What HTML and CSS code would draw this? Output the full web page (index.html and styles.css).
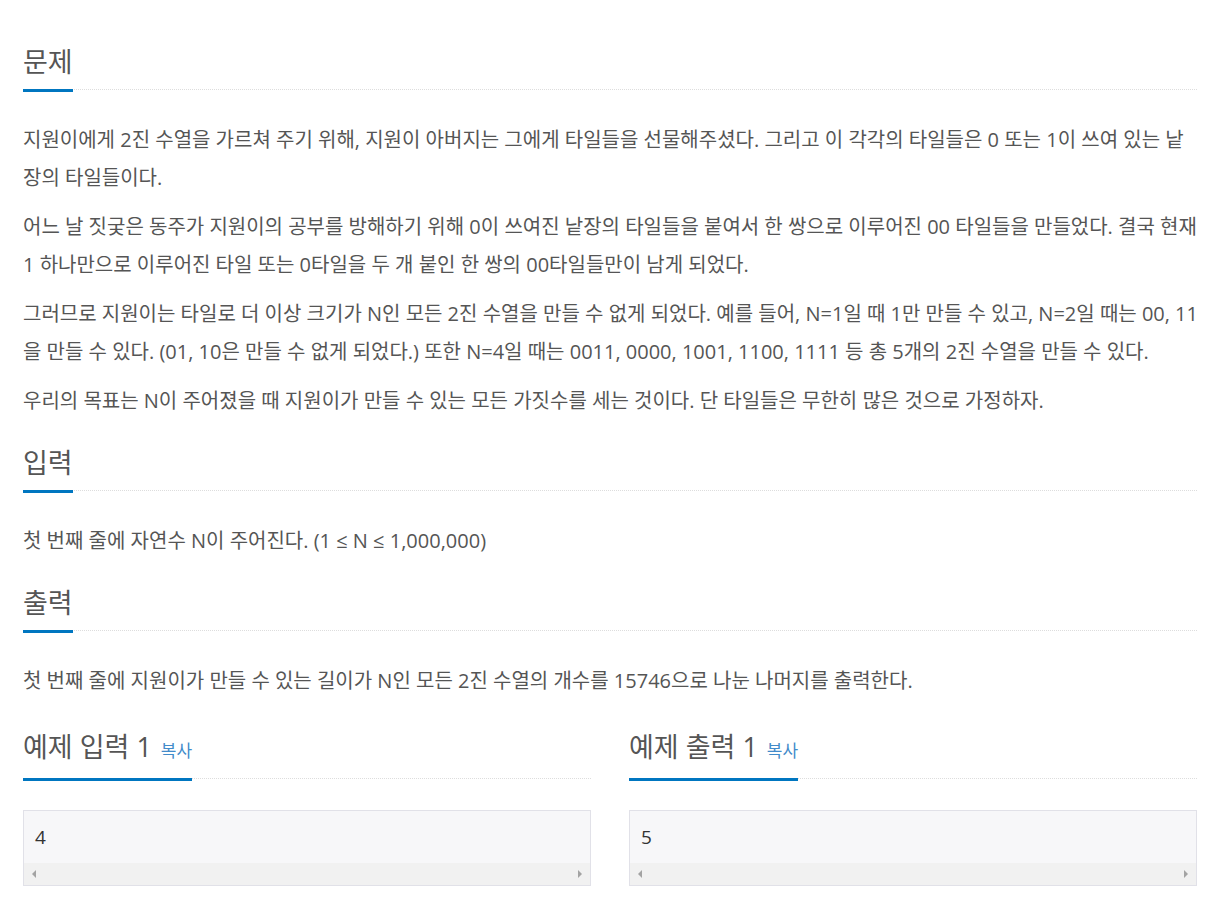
FILE: index.html
```html
<!DOCTYPE html>
<html lang="ko">
<head>
  <meta charset="UTF-8" />
  <meta name="viewport" content="width=device-width, initial-scale=1.0"/>
  <title>문제</title>
  <link rel="stylesheet" href="styles.css">
</head>
<body>
  <div class="problem">

    <!-- 문제 -->
    <section class="section">
      <div class="headline">
        <h2>문제</h2>
      </div>
      <p>지원이에게 2진 수열을 가르쳐 주기 위해, 지원이 아버지는 그에게 타일들을 선물해주셨다. 그리고 이 각각의 타일들은 0 또는 1이 쓰여 있는 낱장의 타일들이다.</p>
      <p>어느 날 짓궂은 동주가 지원이의 공부를 방해하기 위해 0이 쓰여진 낱장의 타일들을 붙여서 한 쌍으로 이루어진 00 타일들을 만들었다. 결국 현재 1 하나만으로 이루어진 타일 또는 0타일을 두 개 붙인 한 쌍의 00타일들만이 남게 되었다.</p>
      <p>그러므로 지원이는 타일로 더 이상 크기가 N인 모든 2진 수열을 만들 수 없게 되었다. 예를 들어, N=1일 때 1만 만들 수 있고, N=2일 때는 00, 11을 만들 수 있다. (01, 10은 만들 수 없게 되었다.) 또한 N=4일 때는 0011, 0000, 1001, 1100, 1111 등 총 5개의 2진 수열을 만들 수 있다.</p>
      <p>우리의 목표는 N이 주어졌을 때 지원이가 만들 수 있는 모든 가짓수를 세는 것이다. 단 타일들은 무한히 많은 것으로 가정하자.</p>
    </section>

    <!-- 입력 -->
    <section class="section">
      <div class="headline">
        <h2>입력</h2>
      </div>
      <p>첫 번째 줄에 자연수 N이 주어진다. (1 ≤ N ≤ 1,000,000)</p>
    </section>

    <!-- 출력 -->
    <section class="section">
      <div class="headline">
        <h2>출력</h2>
      </div>
      <p>첫 번째 줄에 지원이가 만들 수 있는 길이가 N인 모든 2진 수열의 개수를 15746으로 나눈 나머지를 출력한다.</p>
    </section>

    <!-- 예제 -->
    <div class="samples">
      <section class="sample">
        <div class="headline">
          <h2>예제 입력 1 <a class="copy" href="#">복사</a></h2>
        </div>
        <div class="sample-box">
          <pre class="sample-data">4</pre>
          <div class="scrollbar"><span class="arrow-left"></span><span class="arrow-right"></span></div>
        </div>
      </section>
      <section class="sample">
        <div class="headline">
          <h2>예제 출력 1 <a class="copy" href="#">복사</a></h2>
        </div>
        <div class="sample-box">
          <pre class="sample-data">5</pre>
          <div class="scrollbar"><span class="arrow-left"></span><span class="arrow-right"></span></div>
        </div>
      </section>
    </div>

  </div>
</body>
</html>
```

FILE: styles.css
```css
* {
  box-sizing: border-box;
}

body {
  margin: 0;
  font-family: "Open Sans", "Noto Sans CJK KR", sans-serif;
  color: #555;
  background-color: #fff;
}

.problem {
  padding: 45px 15px 0 23px;
}

.section {
  margin-bottom: 26px;
}

.headline {
  border-bottom: 1px dotted #ddd;
  margin-bottom: 31px;
}

.headline h2 {
  display: inline-block;
  margin: 0 0 -3px 0;
  padding-bottom: 10px;
  font-size: 27px;
  line-height: 34px;
  font-weight: normal;
  color: #555;
  border-bottom: 3px solid #0076c0;
}

.section p {
  margin: 0 -4px 11px 0;
  font-size: 20px;
  line-height: 38px;
  word-break: break-all;
}

.section p:last-child {
  margin-bottom: 0;
}

.samples {
  display: grid;
  grid-template-columns: 1fr 1fr;
  gap: 38px;
  padding-top: 4px;
}

.copy {
  font-size: 17px;
  color: #428bca;
  text-decoration: none;
  margin-left: 2px;
}

.sample-box {
  border: 1px solid #e1e1e8;
  background-color: #f7f7f9;
}

.sample-data {
  margin: 0;
  padding: 14px 11px;
  font-family: "Open Sans", sans-serif;
  font-size: 19px;
  line-height: 24px;
  color: #333;
}

.scrollbar {
  height: 22px;
  background-color: #f1f1f1;
  display: flex;
  align-items: center;
  justify-content: space-between;
  padding: 0 8px;
}

.arrow-left {
  width: 0;
  height: 0;
  border-top: 4px solid transparent;
  border-bottom: 4px solid transparent;
  border-right: 4px solid #a3a3a3;
}

.arrow-right {
  width: 0;
  height: 0;
  border-top: 4px solid transparent;
  border-bottom: 4px solid transparent;
  border-left: 4px solid #a3a3a3;
}
```
